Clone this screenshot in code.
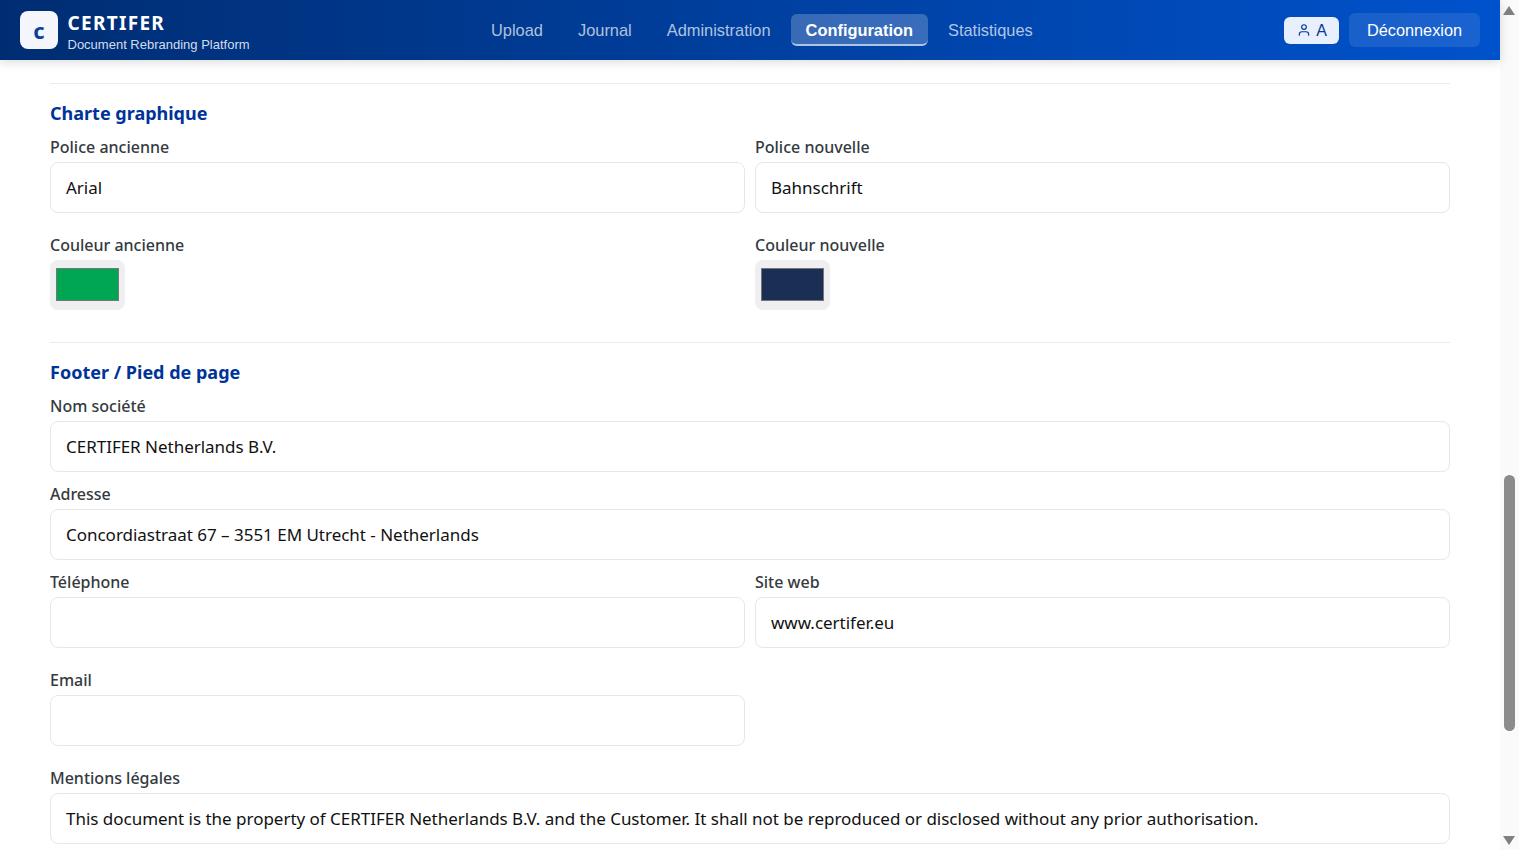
<div class="page">
  <header class="topbar">
    <div class="brand">
      <div class="logo">c</div>
      <div class="brand-text">
        <div class="brand-name">CERTIFER</div>
        <div class="brand-sub">Document Rebranding Platform</div>
      </div>
    </div>
    <nav class="nav">
      <a class="nav-item">Upload</a>
      <a class="nav-item">Journal</a>
      <a class="nav-item">Administration</a>
      <a class="nav-item active">Configuration</a>
      <a class="nav-item">Statistiques</a>
    </nav>
    <div class="actions">
      <button class="user">
        <svg width="14" height="14" viewBox="0 0 24 24" fill="none" stroke="currentColor" stroke-width="2" stroke-linecap="round" stroke-linejoin="round"><circle cx="12" cy="7" r="4"/><path d="M4 21v-1.500a4.500 4.500 0 0 1 4.500-4.500h7a4.500 4.500 0 0 1 4.500 4.500V21"/></svg>
        <span class="user-initial">A</span>
      </button>
      <button class="logout">Déconnexion</button>
    </div>
  </header>

  <main class="content">
    <section class="section">
      <h2>Charte graphique</h2>
      <div class="grid">
        <div class="field"><label>Police ancienne</label><div class="input">Arial</div></div>
        <div class="field"><label>Police nouvelle</label><div class="input">Bahnschrift</div></div>
        <div class="field"><label>Couleur ancienne</label><div class="swatch"><span class="green"></span></div></div>
        <div class="field"><label>Couleur nouvelle</label><div class="swatch"><span class="navy"></span></div></div>
      </div>
    </section>
    <section class="section">
      <h2>Footer / Pied de page</h2>
      <div class="field"><label>Nom société</label><div class="input">CERTIFER Netherlands B.V.</div></div>
      <div class="field"><label>Adresse</label><div class="input">Concordiastraat 67 – 3551 EM Utrecht - Netherlands</div></div>
      <div class="grid">
        <div class="field"><label>Téléphone</label><div class="input"></div></div>
        <div class="field"><label>Site web</label><div class="input">www.certifer.eu</div></div>
        <div class="field"><label>Email</label><div class="input"></div></div>
      </div>
      <div class="field"><label>Mentions légales</label><div class="input">This document is the property of CERTIFER Netherlands B.V. and the Customer. It shall not be reproduced or disclosed without any prior authorisation.</div></div>
    </section>
  </main>

  <aside class="scrollbar">
    <span class="arrow up"></span>
    <span class="thumb"></span>
    <span class="arrow down"></span>
  </aside>
</div>

<style>
  :global(body) { margin: 0; background: #fff; overflow: hidden; }
  .page { width: 1519px; height: 850px; position: relative; overflow: hidden; font-family: "Noto Sans", "Open Sans", sans-serif; color: #212529; }
  .topbar { width: 1500px; height: 60px; box-sizing: border-box; padding: 0 20px; display: flex; align-items: center; background: linear-gradient(90deg, #002d72, #0052cc); box-shadow: 0 2px 10px rgba(0,0,0,.15); position: relative; z-index: 2; }
  .brand { display: flex; align-items: center; gap: 10px; width: 456px; color: #fff; }
  .logo { width: 38px; height: 38px; background: #f4f6fb; border-radius: 8px; color: #0a3fa0; font: 700 22px/38px "Noto Sans", sans-serif; text-align: center; }
  .brand-text { margin-top: 5px; margin-left: -0.500px; }
  .brand-name { font-size: 19px; font-weight: 700; letter-spacing: 1.300px; line-height: 24px; }
  .brand-sub { font: 13px/18px "Liberation Sans", sans-serif; color: #d3dcee; margin-top: 1px; }
  .nav { display: flex; gap: 5px; }
  .nav-item { font: 16.400px/21px "Liberation Sans", sans-serif; color: rgba(255,255,255,.7); padding: 6px 15px 3px; border-bottom: 2px solid transparent; border-radius: 6px; }
  .nav-item.active { color: #fff; font-weight: 700; background: rgba(255,255,255,.22); border-bottom-color: rgba(255,255,255,.6); }
  .actions { margin-left: auto; display: flex; align-items: center; gap: 10px; }
  .user { display: flex; align-items: center; gap: 5px; height: 27px; width: 55px; box-sizing: border-box; justify-content: center; border: 0; padding: 0 0 0 1px; border-radius: 6px; background: #e8f0fe; color: #0a3a94; font: 16px/20px "Liberation Sans", sans-serif; }
  .user-initial { padding-top: 2px; }
  .logout { height: 34px; width: 131px; border: 0; padding: 1px 0 0; border-radius: 6px; background: rgba(255,255,255,.1); color: #fff; font: 16.300px "Liberation Sans", sans-serif; }
  .content { width: 1400px; margin-left: 50px; padding-top: 23px; }
  .section { border-top: 1px solid #e9ecef; padding-top: 17px; }
  .section + .section { margin-top: 22px; }
  h2 { margin: 0; color: #003399; font-size: 18px; line-height: 24px; font-weight: 700; }
  .grid { display: grid; grid-template-columns: 695px 695px; column-gap: 10px; }
  label { display: block; font-size: 16px; line-height: 22px; color: #343a40; font-weight: 500; margin-bottom: 4px; }
  .field { padding-top: 11px; }
  .input { height: 51px; box-sizing: border-box; border: 1px solid #e5e7eb; border-radius: 8px; padding: 0 15px; line-height: 49px; font-size: 17px; letter-spacing: -0.020px; color: #111; background: #fff; white-space: nowrap; }
  .grid .field { padding-bottom: 10px; }
  .swatch { width: 75px; height: 50px; box-sizing: border-box; background: #efeff1; border-radius: 8px; padding: 8px 6px 9px; display: flex; }
  .swatch span { flex: 1; border: 1px solid #767676; }
  .green { background: #00a651; }
  .navy { background: #1b2f55; }
  .scrollbar { position: absolute; right: 0; top: 0; width: 19px; height: 850px; background: #fafafa; }
  .thumb { position: absolute; left: 4px; top: 475px; width: 11px; height: 256px; background: #8b8b8b; border-radius: 6px; }
  .arrow { position: absolute; left: 3px; width: 0; height: 0; border-left: 6.500px solid transparent; border-right: 6.500px solid transparent; }
  .up { top: 6px; border-bottom: 9px solid #808080; }
  .down { bottom: 5px; border-top: 9px solid #808080; }
</style>
